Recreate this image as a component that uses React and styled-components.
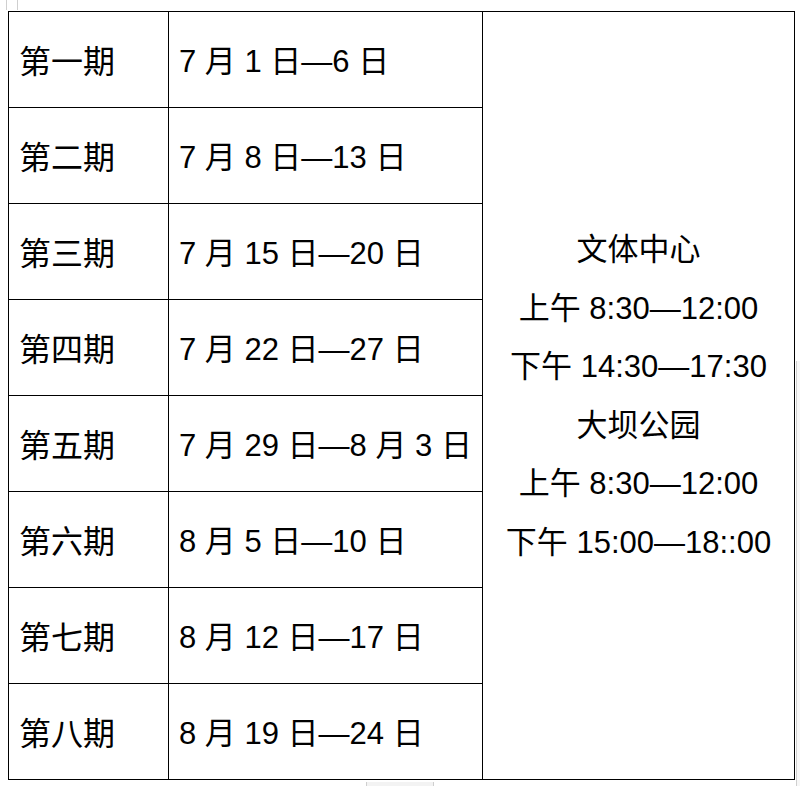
import React from 'react';
import styled, { createGlobalStyle } from 'styled-components';

const GlobalStyle = createGlobalStyle`
    html, body {
        margin: 0;
        padding: 0;
        background: #ffffff;
    }
    body {
        font-family: "Liberation Sans", "Noto Sans CJK SC", sans-serif;
        color: #000000;
    }
`;

const Page = styled.div`
    position: relative;
    width: 800px;
    height: 786px;
    overflow: hidden;
    padding: 11px 0 0 8px;
    box-sizing: border-box;
`;

const Table = styled.table`
    border-collapse: collapse;
    table-layout: fixed;
    width: 786px;
    font-size: 31px;
`;

const Row = styled.tr`
    height: 96px;
`;

const Cell = styled.td`
    border: 1.3px solid #000;
    padding: 0 0 2px ${p => p.$indent || 10}px;
    vertical-align: middle;
    white-space: nowrap;
`;

const Label = styled.span`
    font-size: 32px;
`;

const PlaceCell = styled.td`
    border: 1.3px solid #000;
    text-align: center;
    vertical-align: middle;
    padding: 2px 0 0 0;
    white-space: nowrap;
`;

const Line = styled.div`
    line-height: 58.5px;
`;

/* word editor marks at the page edges */
const Mark = styled.div`
    position: absolute;
    left: ${p => p.$x}px;
    top: ${p => p.$y}px;
    width: ${p => p.$w}px;
    height: ${p => p.$h}px;
    background: ${p => p.$bg || '#f3f3f3'};
    border-left: 1px solid #cfcfcf;
    border-right: 1px solid #cfcfcf;
    box-sizing: border-box;
`;

const periods = [
    ['第一期', '7 月 1 日—6 日'],
    ['第二期', '7 月 8 日—13 日'],
    ['第三期', '7 月 15 日—20 日'],
    ['第四期', '7 月 22 日—27 日'],
    ['第五期', '7 月 29 日—8 月 3 日'],
    ['第六期', '8 月 5 日—10 日'],
    ['第七期', '8 月 12 日—17 日'],
    ['第八期', '8 月 19 日—24 日'],
];

const places = [
    '文体中心',
    '上午 8:30—12:00',
    '下午 14:30—17:30',
    '大坝公园',
    '上午 8:30—12:00',
    '下午 15:00—18::00',
];

const App = () => (
    <Page>
        <GlobalStyle />
        <Mark $x={6} $y={0} $w={12} $h={10} $bg="#ffffff" />
        <Mark $x={796} $y={361} $w={6} $h={425} $bg="#f7f7f7" />
        <Mark $x={366} $y={782} $w={68} $h={6} />
        <Table>
            <colgroup>
                <col style={{ width: 160 }} />
                <col style={{ width: 314 }} />
                <col style={{ width: 312 }} />
            </colgroup>
            <tbody>
                {periods.map(([name, dates], i) => (
                    <Row key={name}>
                        <Cell><Label>{name}</Label></Cell>
                        <Cell>{dates}</Cell>
                        {i === 0 && (
                            <PlaceCell rowSpan={periods.length}>
                                {places.map((p, j) => <Line key={j}>{p}</Line>)}
                            </PlaceCell>
                        )}
                    </Row>
                ))}
            </tbody>
        </Table>
    </Page>
);

export default App;
